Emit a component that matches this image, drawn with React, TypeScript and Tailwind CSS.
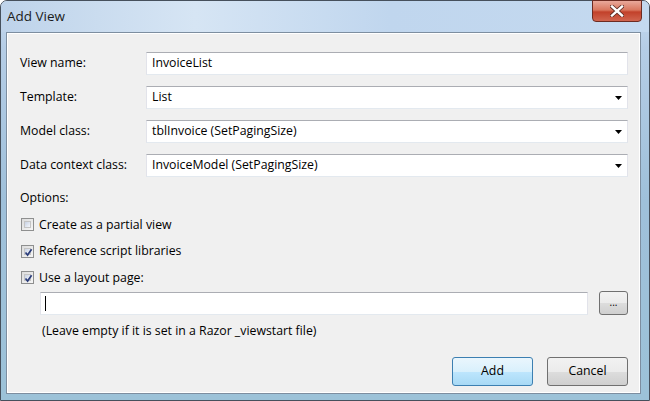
import React from 'react';

function Checkbox({ checked }: { checked: boolean }) {
  return (
    <div className="w-[13px] h-[13px] border border-[#8e8f8f] bg-[linear-gradient(135deg,#dcdcdc,#f6f6f6)] p-[2px]">
      <div className="relative w-full h-full border border-[#c4c4c4] bg-[linear-gradient(135deg,#c8d2e4,#f4f6fa)]">
        {checked && (
          <svg viewBox="0 0 9 9" className="absolute -left-[1px] -top-[1px] w-[9px] h-[9px]">
            <path d="M1.5 4.5 L3.6 7 L7.6 1.2" fill="none" stroke="#2a3c7a" strokeWidth="1.7" />
          </svg>
        )}
      </div>
    </div>
  );
}

function Field({ label, value, dropdown }: { label: string; value: string; dropdown?: boolean }) {
  return (
    <div className="flex items-center h-[23px]">
      <div className="w-[126px] shrink-0">{label}</div>
      <div className="flex-1 h-full flex items-center justify-between bg-white border border-t-[#abadb3] border-x-[#e2e3ea] border-b-[#e3e9ef] pl-[5px] pr-[5px]">
        <span>{value}</span>
        {dropdown && (
          <svg viewBox="0 0 7 4" className="w-[7px] h-[4px]">
            <path d="M0 0 H7 L3.5 4 Z" fill="#000" />
          </svg>
        )}
      </div>
    </div>
  );
}

export default function App() {
  return (
    <div
      className="w-[650px] h-[401px] flex flex-col rounded-t-[7px] border border-[#46505c] bg-[linear-gradient(180deg,#c6daef_0%,#b5cde6_12%,#9fc0da_50%,#9cc2d8_100%)] text-[12.3px] text-black"
      style={{ fontFamily: '"Open Sans", "Noto Sans", sans-serif' }}
    >
      <div className="relative h-[31px] shrink-0 flex items-center pl-[6px] bg-[linear-gradient(90deg,#bed3ea_0%,#d6e5f4_30%,#c0d6ee_60%,#c4d9ef_100%)] rounded-t-[6px]">
        <span className="text-[13.5px] text-[#1b1b1b] -mt-[1px]">Add View</span>
        <div className="absolute right-[7px] -top-[1px] w-[50px] h-[22px] rounded-b-[4px] border border-[#6d2b21] bg-[linear-gradient(180deg,#e9a99b_0%,#d9775f_45%,#c2412a_55%,#d0654f_100%)] flex items-center justify-center">
          <svg viewBox="0 0 14 12" className="w-[14px] h-[12px]">
            <path d="M2 1.5 L12 10.5 M12 1.5 L2 10.5" stroke="#5a2a22" strokeWidth="4" strokeLinecap="square" />
            <path d="M2 1.5 L12 10.5 M12 1.5 L2 10.5" stroke="#ffffff" strokeWidth="2.4" strokeLinecap="square" />
          </svg>
        </div>
      </div>
      <div className="flex-1 ml-[5px] mr-[8px] mb-[6px] border border-[#7d8ea0]">
        <div className="h-full border border-white bg-[#f0f0f0] flex flex-col pl-[12px] pr-[11px]">
          <div className="mt-[18px] flex flex-col gap-[11px]">
            <Field label="View name:" value="InvoiceList" />
            <Field label="Template:" value="List" dropdown />
            <Field label="Model class:" value="tblInvoice (SetPagingSize)" dropdown />
            <Field label="Data context class:" value="InvoiceModel (SetPagingSize)" dropdown />
          </div>
          <div className="mt-[8px] h-[26.5px] flex items-center">Options:</div>
          <div className="h-[26.5px] flex items-center gap-[5px] pl-[1px]">
            <Checkbox checked={false} />
            <span>Create as a partial view</span>
          </div>
          <div className="h-[26.5px] flex items-center gap-[5px] pl-[1px]">
            <Checkbox checked />
            <span>Reference script libraries</span>
          </div>
          <div className="h-[26.5px] flex items-center gap-[5px] pl-[1px]">
            <Checkbox checked />
            <span>Use a layout page:</span>
          </div>
          <div className="flex items-center gap-[11px] pl-[20px]">
            <div className="flex-1 h-[23px] flex items-center bg-white border border-t-[#abadb3] border-x-[#e2e3ea] border-b-[#e3e9ef] pl-[4px]">
              <div className="w-[1px] h-[15px] bg-black" />
            </div>
            <div className="w-[29px] h-[24px] rounded-[3px] border border-[#707070] bg-[linear-gradient(180deg,#f2f2f2_0%,#ebebeb_50%,#dddddd_50%,#cfcfcf_100%)] flex items-center justify-center text-[10px] leading-none pb-[3px]">
              ...
            </div>
          </div>
          <div className="mt-[8px] pl-[22px] h-[16px] flex items-center">(Leave empty if it is set in a Razor _viewstart file)</div>
          <div className="mt-[18px] flex justify-end gap-[14px]">
            <div className="w-[81px] h-[29px] rounded-[3px] border border-[#3c7fb1] bg-[linear-gradient(180deg,#eaf6fd_0%,#d9f0fc_50%,#bee6fd_50%,#a7d9f5_100%)] flex items-center justify-center">
              Add
            </div>
            <div className="w-[81px] h-[29px] rounded-[3px] border border-[#707070] bg-[linear-gradient(180deg,#f2f2f2_0%,#ebebeb_50%,#dddddd_50%,#cfcfcf_100%)] flex items-center justify-center">
              Cancel
            </div>
          </div>
        </div>
      </div>
    </div>
  );
}
